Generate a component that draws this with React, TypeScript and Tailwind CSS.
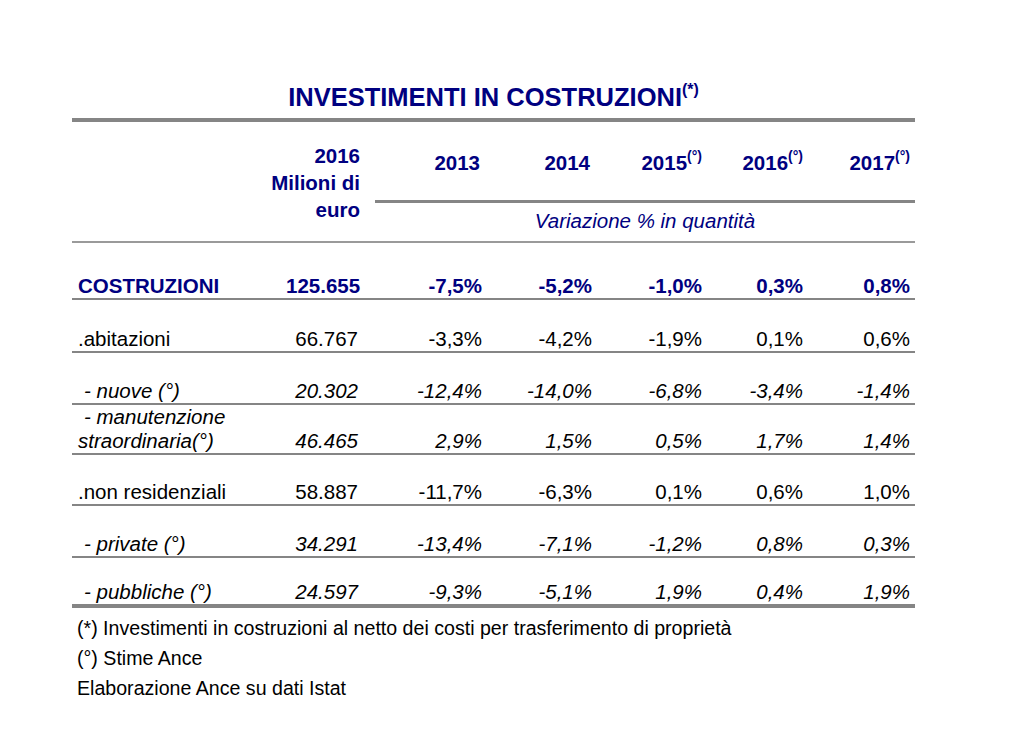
const navy = "text-[#000080]";

type Row = {
  label: string;
  indent?: boolean;
  value: string;
  changes: string[];
  kind: "bold" | "regular" | "italic";
  height: string;
  border: string;
  twoLine?: string;
};

const rows: Row[] = [
  { label: "COSTRUZIONI", value: "125.655", changes: ["-7,5%", "-5,2%", "-1,0%", "0,3%", "0,8%"], kind: "bold", height: "h-[57px]", border: "border-b-2" },
  { label: ".abitazioni", value: "66.767", changes: ["-3,3%", "-4,2%", "-1,9%", "0,1%", "0,6%"], kind: "regular", height: "h-[53px]", border: "border-b-2" },
  { label: "- nuove (°)", indent: true, value: "20.302", changes: ["-12,4%", "-14,0%", "-6,8%", "-3,4%", "-1,4%"], kind: "italic", height: "h-[52px]", border: "border-b-2" },
  { label: "straordinaria(°)", twoLine: "- manutenzione", value: "46.465", changes: ["2,9%", "1,5%", "0,5%", "1,7%", "1,4%"], kind: "italic", height: "h-[50px]", border: "border-b-2" },
  { label: ".non residenziali", value: "58.887", changes: ["-11,7%", "-6,3%", "0,1%", "0,6%", "1,0%"], kind: "regular", height: "h-[51px]", border: "border-b-2" },
  { label: "- private (°)", indent: true, value: "34.291", changes: ["-13,4%", "-7,1%", "-1,2%", "0,8%", "0,3%"], kind: "italic", height: "h-[52px]", border: "border-b-2" },
  { label: "- pubbliche (°)", indent: true, value: "24.597", changes: ["-9,3%", "-5,1%", "1,9%", "0,4%", "1,9%"], kind: "italic", height: "h-[50px]", border: "border-b-4" },
];

const colWidths = ["w-[107px]", "w-[110px]", "w-[110px]", "w-[101px]", "w-[107px]"];

const years = [
  { y: "2013", sup: false },
  { y: "2014", sup: false },
  { y: "2015", sup: true },
  { y: "2016", sup: true },
  { y: "2017", sup: true },
];

function kindClass(kind: Row["kind"]) {
  if (kind === "bold") return `font-bold ${navy}`;
  if (kind === "italic") return "italic text-black";
  return "text-black";
}

export default function App() {
  return (
    <div className="min-h-[739px] w-[1024px] bg-white font-['Liberation_Sans',Arial,sans-serif]">
      <div className="ml-[72px] w-[843px] pt-[82px]">
        <h1 className={`text-center text-[25.5px] leading-[30px] font-bold ${navy}`}>
          INVESTIMENTI IN COSTRUZIONI
          <span className="relative top-[-11px] text-[16px] leading-[0]">(*)</span>
        </h1>

        <div className="mt-[6px] h-[4px] bg-[#858585]" />

        {/* header */}
        <div className="flex">
          <div className="w-[303px]">
            <div className={`w-[288px] pt-[20px] text-right text-[20.5px] leading-[27px] font-bold ${navy}`}>
              <div>2016</div>
              <div>Milioni di</div>
              <div>euro</div>
            </div>
          </div>
          <div className="flex-1">
            <div className={`flex h-[78px] pt-[27px] pr-[5px] text-[20.5px] leading-[27px] font-bold ${navy}`}>
              {years.map((yr, i) => (
                <div key={yr.y} className={`${colWidths[i]} text-right ${yr.sup ? "" : "pr-[2px]"}`}>
                  {yr.y}
                  {yr.sup && <span className="relative top-[-9px] text-[14px] leading-[0]">(°)</span>}
                </div>
              ))}
            </div>
            <div className="h-[3px] bg-[#858585]" />
            <div className={`h-[38px] pt-[4px] text-center text-[20.5px] leading-[27px] italic ${navy}`}>
              Variazione % in quantità
            </div>
          </div>
        </div>
        <div className="h-[2px] bg-[#9a9a9a]" />

        {/* body */}
        {rows.map((r) => (
          <div
            key={r.label}
            className={`flex items-end ${r.height} ${r.border} border-[#858585] pr-[5px] text-[20.5px] leading-[24px] ${kindClass(r.kind)}`}
          >
            <div className={`w-[214px] ${r.indent ? "pl-[12px]" : "pl-[6px]"}`}>
              {r.twoLine && <div className="pl-[6px]">{r.twoLine}</div>}
              <div>{r.label}</div>
            </div>
            <div className="w-[72px] text-right">{r.value}</div>
            <div className="w-[17px]" />
            {r.changes.map((c, i) => (
              <div key={i} className={`${colWidths[i]} text-right`}>
                {c}
              </div>
            ))}
          </div>
        ))}

        {/* notes */}
        <div className="mt-[5px] pl-[5px] text-[19.6px] leading-[30px] text-black">
          <div>(*) Investimenti in costruzioni al netto dei costi per trasferimento di proprietà</div>
          <div>(°) Stime Ance</div>
          <div>Elaborazione Ance su dati Istat</div>
        </div>
      </div>
    </div>
  );
}
